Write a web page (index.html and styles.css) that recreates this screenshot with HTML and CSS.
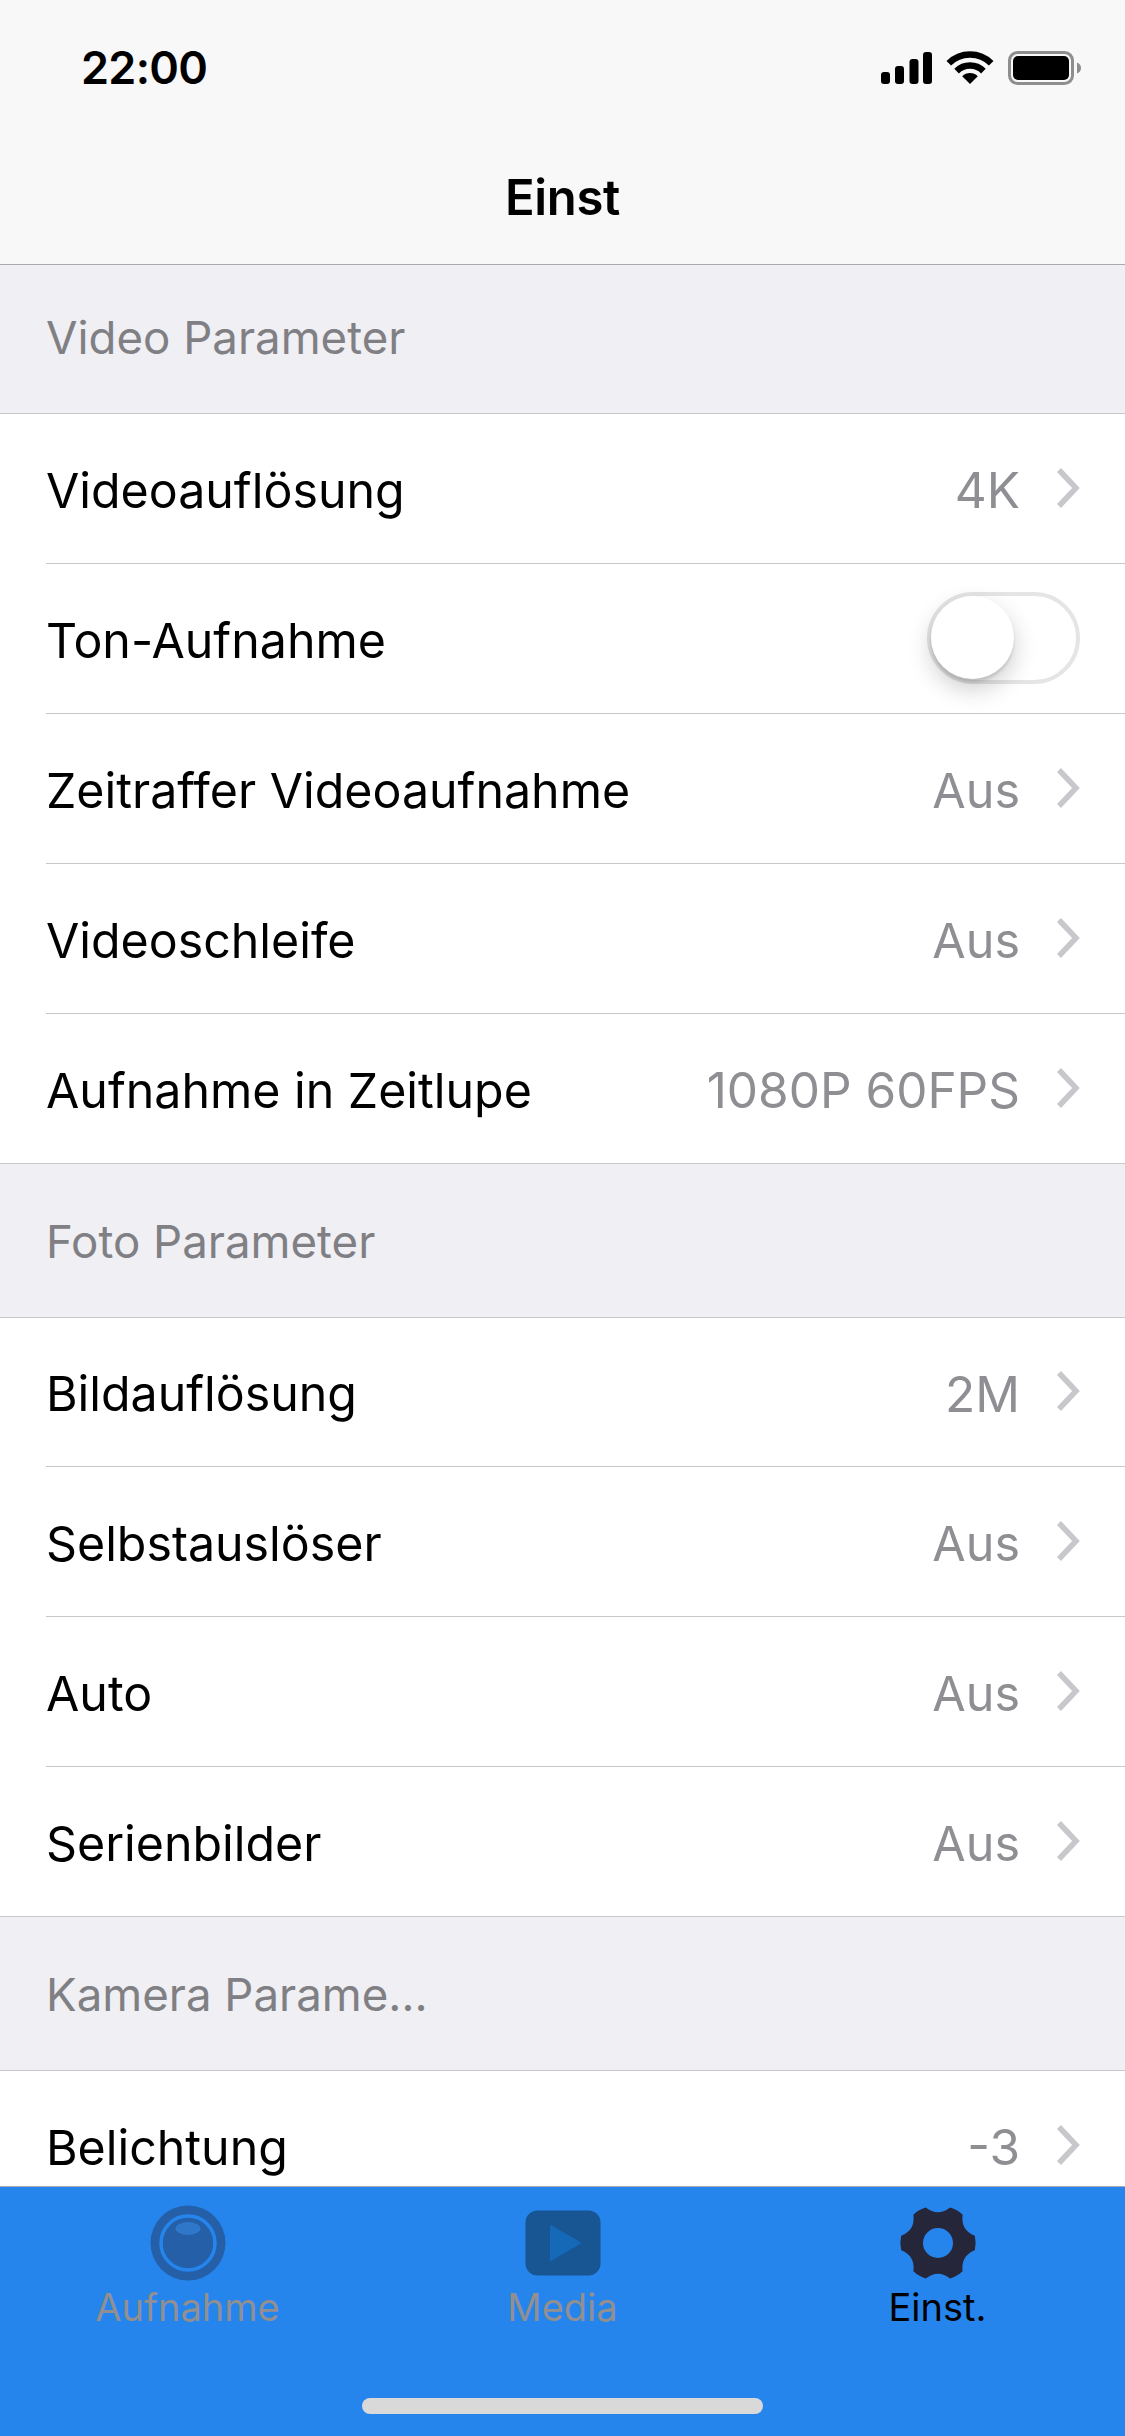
FILE: index.html
```html
<!DOCTYPE html>
<html lang="de">
<head>
<meta charset="utf-8">
<title>Einst</title>
<link rel="stylesheet" href="styles.css">
</head>
<body>
<div class="screen">
  <header class="nav">
    <div class="status">
      <span class="time">22:00</span>
      <svg class="status-icons" width="200" height="34" viewBox="0 0 200 34">
        <rect x="0" y="21" width="9" height="12" rx="3"/>
        <rect x="14" y="15" width="9" height="18" rx="3"/>
        <rect x="28.500" y="8" width="9" height="25" rx="3"/>
        <rect x="42" y="1" width="9" height="32" rx="3"/>
        <path class="wifi" d="M67.800 12.300A30 30 0 0 1 110.200 12.300"/>
        <path class="wifi" d="M75.600 20.100A19 19 0 0 1 102.400 20.100"/>
        <path d="M89 33L81.200 25.200A11 11 0 0 1 96.800 25.200Z"/>
        <rect class="batt-frame" x="128.500" y="1.500" width="63" height="31" rx="8"/>
        <rect x="132" y="5" width="56" height="24" rx="5"/>
        <path class="batt-cap" d="M196 11.500Q200 13 200 17Q200 21 196 22.500Z"/>
      </svg>
    </div>
    <h1 class="title">Einst</h1>
  </header>

  <main class="list">
    <section>
      <h2 class="group group-first">Video Parameter</h2>
      <div class="row"><span class="name">Videoauflösung</span><span class="value value-num">4K</span><svg class="chev" width="24" height="42" viewBox="0 0 24 42"><path d="M3 3L20 21L3 39"/></svg></div>
      <div class="row"><span class="name">Ton-Aufnahme</span><span class="toggle"><span class="knob"></span></span></div>
      <div class="row"><span class="name">Zeitraffer Videoaufnahme</span><span class="value">Aus</span><svg class="chev" width="24" height="42" viewBox="0 0 24 42"><path d="M3 3L20 21L3 39"/></svg></div>
      <div class="row"><span class="name">Videoschleife</span><span class="value">Aus</span><svg class="chev" width="24" height="42" viewBox="0 0 24 42"><path d="M3 3L20 21L3 39"/></svg></div>
      <div class="row row-last"><span class="name">Aufnahme in Zeitlupe</span><span class="value value-num">1080P 60FPS</span><svg class="chev" width="24" height="42" viewBox="0 0 24 42"><path d="M3 3L20 21L3 39"/></svg></div>
    </section>
    <section>
      <h2 class="group">Foto Parameter</h2>
      <div class="row row-short"><span class="name">Bildauflösung</span><span class="value value-num">2M</span><svg class="chev" width="24" height="42" viewBox="0 0 24 42"><path d="M3 3L20 21L3 39"/></svg></div>
      <div class="row"><span class="name">Selbstauslöser</span><span class="value">Aus</span><svg class="chev" width="24" height="42" viewBox="0 0 24 42"><path d="M3 3L20 21L3 39"/></svg></div>
      <div class="row"><span class="name">Auto</span><span class="value">Aus</span><svg class="chev" width="24" height="42" viewBox="0 0 24 42"><path d="M3 3L20 21L3 39"/></svg></div>
      <div class="row row-last"><span class="name">Serienbilder</span><span class="value">Aus</span><svg class="chev" width="24" height="42" viewBox="0 0 24 42"><path d="M3 3L20 21L3 39"/></svg></div>
    </section>
    <section>
      <h2 class="group">Kamera Parame…</h2>
      <div class="row"><span class="name">Belichtung</span><span class="value value-num">-3</span><svg class="chev" width="24" height="42" viewBox="0 0 24 42"><path d="M3 3L20 21L3 39"/></svg></div>
    </section>
  </main>

  <nav class="tabs">
    <div class="tab">
      <svg class="tab-icon" width="80" height="80" viewBox="-40 -40 80 80">
        <circle r="37.500" class="cam-dark"/>
        <circle r="27" class="cam-ring"/>
        <ellipse cy="-14.500" rx="12.500" ry="6.500" class="cam-glint"/>
      </svg>
      <span class="tab-label">Aufnahme</span>
    </div>
    <div class="tab">
      <svg class="tab-icon" width="80" height="80" viewBox="-40 -40 80 80">
        <rect x="-37.500" y="-32.500" width="75" height="65" rx="12" class="media-box"/>
        <path d="M-12 -17L17 0L-12 17Z" class="media-play"/>
      </svg>
      <span class="tab-label">Media</span>
    </div>
    <div class="tab tab-active">
      <svg class="tab-icon" width="80" height="80" viewBox="-40 -40 80 80">
        <path class="gear" fill-rule="evenodd" d="M-15 0A15 15 0 1 0 15 0A15 15 0 1 0 -15 0Z M36.800 -7.200Q38.500 0 36.800 7.200Q22.500 13 24.640 28.270Q19.250 33.340 12.160 35.470Q0 26 -12.160 35.470Q-19.250 33.340 -24.640 28.270Q-22.500 13 -36.800 7.200Q-38.500 0 -36.800 -7.200Q-22.500 -13 -24.640 -28.270Q-19.250 -33.340 -12.160 -35.470Q0 -26 12.160 -35.470Q19.250 -33.340 24.640 -28.270Q22.500 -13 36.800 -7.200Z"/>
      </svg>
      <span class="tab-label">Einst.</span>
    </div>
    <span class="home"></span>
  </nav>
</div>
</body>
</html>
```
FILE: styles.css
```css
* { box-sizing: border-box; }
html, body { margin: 0; padding: 0; }
body { font-family: Inter, "Liberation Sans", sans-serif; background: #fff; color: #000; }

.screen {
  width: 1125px;
  height: 2436px;
  display: flex;
  flex-direction: column;
  overflow: hidden;
}

.nav {
  flex: none;
  height: 265px;
  background: #f8f8f8;
  border-bottom: 1.5px solid #a9a9ae;
}
.status {
  display: flex;
  justify-content: space-between;
  align-items: center;
  height: 136px;
  padding: 0 44px 0 81px;
}
.time { font-size: 45px; font-weight: 600; line-height: 34px; letter-spacing: -0.7px; }
.status-icons { fill: #000; }
.wifi { fill: none; stroke: #000; stroke-width: 6.500; }
.batt-frame { fill: none; stroke: #8e8e8e; stroke-width: 3; }
.batt-cap { fill: #8e8e8e; }
.title {
  margin: 32px 0 0;
  text-align: center;
  font-size: 49px;
  font-weight: 600;
  line-height: 60px;
  letter-spacing: -0.3px;
}

.list { flex: 1; min-height: 0; overflow: hidden; }
.group {
  margin: 0;
  height: 154px;
  padding: 34px 46px 0;
  background: #efeff4;
  border-bottom: 1.5px solid #c8c7cc;
  font-size: 45.600px;
  font-weight: 400;
  line-height: 88px;
  color: #808084;
}
.group-first { height: 149px; padding-top: 29px; }
.row {
  position: relative;
  height: 150px;
  display: flex;
  align-items: center;
  margin-left: 46px;
  padding: 3px 44px 0 0;
  border-bottom: 1.5px solid #c8c7cc;
  background: #fff;
  font-size: 48.300px;
}
.row-short { height: 149px; }
.row-last { margin-left: 0; padding-left: 46px; }
.name { flex: 1; }
.value { color: #8e8e93; margin-right: 37px; font-size: 48.500px; }
.value-num { font-size: 49.500px; }
.chev { flex: none; margin: -5px 1.500px 0 -1.500px; }
.chev path { fill: none; stroke: #c7c7cc; stroke-width: 5.500; }

.toggle {
  position: relative;
  width: 153px;
  height: 92px;
  border: 4.500px solid #e5e5e5;
  border-radius: 46px;
  margin: -5px 1px 0 0;
}
.knob {
  position: absolute;
  left: 0;
  top: 0;
  width: 83px;
  height: 83px;
  border-radius: 50%;
  background: #fff;
  box-shadow: 0 10px 24px rgba(0, 0, 0, 0.2), 0 3px 3px rgba(0, 0, 0, 0.12);
}

.tabs {
  flex: none;
  position: relative;
  height: 250px;
  display: flex;
  background: #2585ec;
  border-top: 1.5px solid #a9a9ae;
  padding-top: 16px;
}
.tab {
  flex: 1;
  display: flex;
  flex-direction: column;
  align-items: center;
  color: #918f92;
}
.tab-icon { flex: none; }
.tab-label { font-size: 38px; line-height: 46px; margin-top: 1px; }
.tab-active { color: #000; }
.cam-dark { fill: #245fa8; }
.cam-ring { fill: #245fa8; stroke: #2585ec; stroke-width: 3.500; }
.cam-glint { fill: #2e77ca; }
.media-box { fill: #175593; }
.media-play { fill: #1668b8; stroke: #1668b8; stroke-width: 2; stroke-linejoin: round; }
.gear { fill: #26263a; }
.home {
  position: absolute;
  left: 362px;
  bottom: 22px;
  width: 401px;
  height: 16px;
  border-radius: 8px;
  background: #d9d9d9;
}
```
